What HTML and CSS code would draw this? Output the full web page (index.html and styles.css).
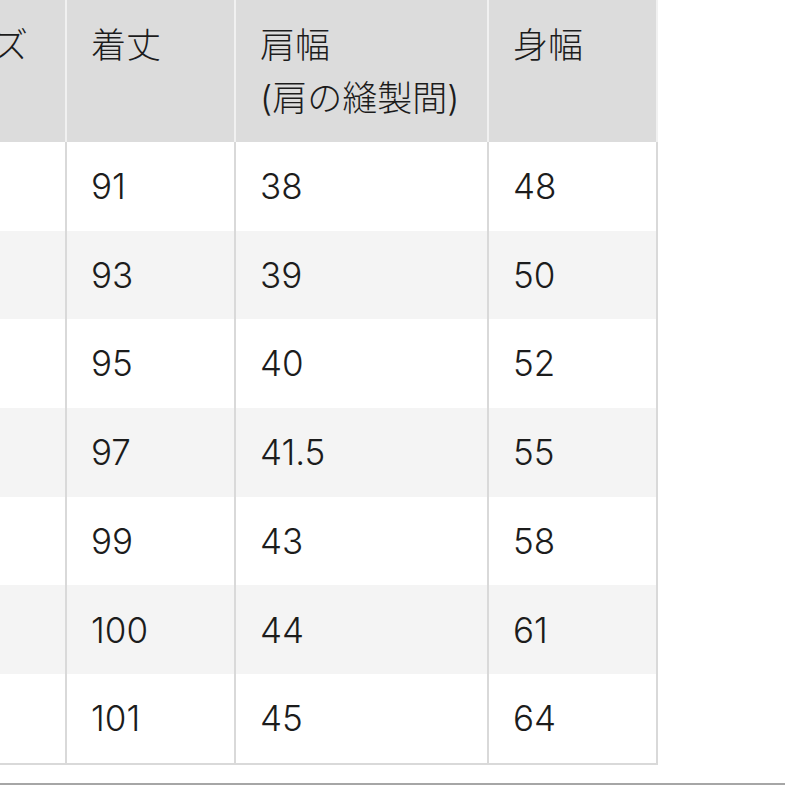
FILE: index.html
```html
<!DOCTYPE html>
<html lang="ja">
<head>
<meta charset="utf-8">
<link rel="stylesheet" href="styles.css">
</head>
<body>
<div class="page">
  <table class="size-table">
    <colgroup>
      <col class="c-size">
      <col class="c-len">
      <col class="c-shoulder">
      <col class="c-body">
    </colgroup>
    <thead>
      <tr>
        <th>サイズ</th>
        <th>着丈</th>
        <th>肩幅<br>(肩の縫製間)</th>
        <th>身幅</th>
      </tr>
    </thead>
    <tbody>
      <tr><td>XS</td><td>91</td><td>38</td><td>48</td></tr>
      <tr><td>S</td><td>93</td><td>39</td><td>50</td></tr>
      <tr><td>M</td><td>95</td><td>40</td><td>52</td></tr>
      <tr><td>L</td><td>97</td><td>41.5</td><td>55</td></tr>
      <tr><td>XL</td><td>99</td><td>43</td><td>58</td></tr>
      <tr><td>XXL</td><td>100</td><td>44</td><td>61</td></tr>
      <tr><td>3XL</td><td>101</td><td>45</td><td>64</td></tr>
    </tbody>
  </table>
  <div class="bottom-rule"></div>
</div>
</body>
</html>
```

FILE: styles.css
```css
html, body {
  margin: 0;
  padding: 0;
  background: #ffffff;
}

.page {
  width: 785px;
  height: 785px;
  overflow: hidden;
  display: flex;
  flex-direction: column;
  font-family: "Inter", "Noto Sans CJK JP", sans-serif;
  color: #1c1c1c;
}

.size-table {
  margin-left: -102px;
  border-collapse: separate;
  border-spacing: 0;
  table-layout: fixed;
  width: 760px;
  font-size: 35px;
  font-weight: 300;
}

.c-size { width: 167px; }
.c-len { width: 169px; }
.c-shoulder { width: 253px; }
.c-body { width: 171px; }

.size-table th,
.size-table td {
  text-align: left;
  vertical-align: middle;
  padding: 0 24px;
  line-height: 52.5px;
  white-space: nowrap;
  box-sizing: border-box;
}

.size-table th {
  font-weight: 300;
  background: #dcdcdc;
  border-left: 2px solid #f1f1f1;
  padding-top: 19px;
  padding-bottom: 18px;
  vertical-align: top;
  height: 142px;
}

.size-table td {
  border-left: 2px solid #d9d9d9;
  padding-top: 18px;
  padding-bottom: 18px;
  height: 88.7px;
}

.size-table th:last-child {
  border-right: 2px solid #f1f1f1;
}

.size-table td:last-child {
  border-right: 2px solid #d9d9d9;
}

.size-table tbody tr:nth-child(even) td {
  background: #f4f4f4;
}

.size-table tbody tr:last-child td {
  border-bottom: 2px solid #d9d9d9;
}

.bottom-rule {
  margin-top: auto;
  height: 2px;
  background: #a6a6a6;
}
```
